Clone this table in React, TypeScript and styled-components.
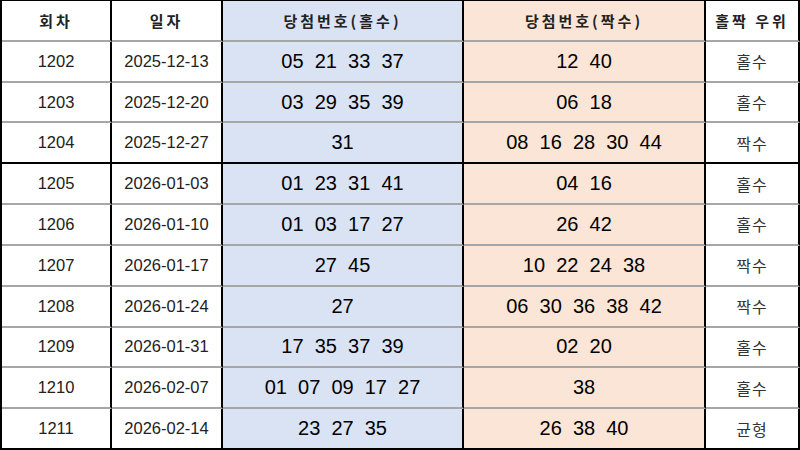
import React from "react";
import styled, { createGlobalStyle } from "styled-components";

const Global = createGlobalStyle`
  html, body { margin: 0; padding: 0; background: #ffffff; }
  body { font-family: "Liberation Sans", "Noto Sans CJK KR", sans-serif; }
  * { box-sizing: border-box; }
`;

const Table = styled.div`
  width: 800px;
  height: 450px;
  display: grid;
  grid-template-columns: 110px 111px 241px 242px 1fr;
  grid-template-rows: repeat(11, 1fr);
  border-top: 1px solid #000;
  border-left: 2px solid #000;
  overflow: hidden;
  background: #fff;
`;

type Tone = "none" | "odd" | "even";
type Line = "gray" | "black";

const bgOf = (t: Tone) =>
  t === "odd" ? "#dae3f3" : t === "even" ? "#fbe5d6" : "#ffffff";

const Cell = styled.div<{ $tone: Tone; $line: Line }>`
  display: flex;
  align-items: center;
  justify-content: center;
  background: ${(p) => bgOf(p.$tone)};
  border-right: 2px solid #000;
  border-bottom: ${(p) =>
    p.$line === "black" ? "2px solid #000" : "2px solid #a6a6a6"};
  white-space: pre;
`;

const HeadText = styled.span`
  font-family: "Noto Sans CJK KR", "Liberation Sans", sans-serif;
  font-weight: 700;
  font-size: 15px;
  letter-spacing: 3px;
  color: #222;
`;

const PlainText = styled.span`
  font-family: "Liberation Sans", sans-serif;
  font-size: 16.5px;
  color: #222;
`;

const NumText = styled.span`
  font-family: "Liberation Sans", sans-serif;
  font-size: 20px;
  color: #000;
`;

const ResultText = styled.span`
  font-family: "Noto Sans CJK KR", sans-serif;
  font-size: 16px;
  letter-spacing: 1px;
  color: #333;
`;

type Row = {
  no: string;
  date: string;
  odd: string[];
  even: string[];
  result: string;
};

const rows: Row[] = [
  { no: "1202", date: "2025-12-13", odd: ["05", "21", "33", "37"], even: ["12", "40"], result: "홀수" },
  { no: "1203", date: "2025-12-20", odd: ["03", "29", "35", "39"], even: ["06", "18"], result: "홀수" },
  { no: "1204", date: "2025-12-27", odd: ["31"], even: ["08", "16", "28", "30", "44"], result: "짝수" },
  { no: "1205", date: "2026-01-03", odd: ["01", "23", "31", "41"], even: ["04", "16"], result: "홀수" },
  { no: "1206", date: "2026-01-10", odd: ["01", "03", "17", "27"], even: ["26", "42"], result: "홀수" },
  { no: "1207", date: "2026-01-17", odd: ["27", "45"], even: ["10", "22", "24", "38"], result: "짝수" },
  { no: "1208", date: "2026-01-24", odd: ["27"], even: ["06", "30", "36", "38", "42"], result: "짝수" },
  { no: "1209", date: "2026-01-31", odd: ["17", "35", "37", "39"], even: ["02", "20"], result: "홀수" },
  { no: "1210", date: "2026-02-07", odd: ["01", "07", "09", "17", "27"], even: ["38"], result: "홀수" },
  { no: "1211", date: "2026-02-14", odd: ["23", "27", "35"], even: ["26", "38", "40"], result: "균형" },
];

const headers: { label: string; tone: Tone }[] = [
  { label: "회차", tone: "none" },
  { label: "일자", tone: "none" },
  { label: "당첨번호(홀수)", tone: "odd" },
  { label: "당첨번호(짝수)", tone: "even" },
  { label: "홀짝 우위", tone: "none" },
];

export default function App() {
  return (
    <>
      <Global />
      <Table>
        {headers.map((h) => (
          <Cell key={h.label} $tone={h.tone} $line="gray">
            <HeadText>{h.label}</HeadText>
          </Cell>
        ))}
        {rows.map((r, i) => {
          const line: Line = r.no === "1204" || i === rows.length - 1 ? "black" : "gray";
          return (
            <React.Fragment key={r.no}>
              <Cell $tone="none" $line={line}>
                <PlainText>{r.no}</PlainText>
              </Cell>
              <Cell $tone="none" $line={line}>
                <PlainText>{r.date}</PlainText>
              </Cell>
              <Cell $tone="odd" $line={line}>
                <NumText>{r.odd.join("  ")}</NumText>
              </Cell>
              <Cell $tone="even" $line={line}>
                <NumText>{r.even.join("  ")}</NumText>
              </Cell>
              <Cell $tone="none" $line={line}>
                <ResultText>{r.result}</ResultText>
              </Cell>
            </React.Fragment>
          );
        })}
      </Table>
    </>
  );
}
